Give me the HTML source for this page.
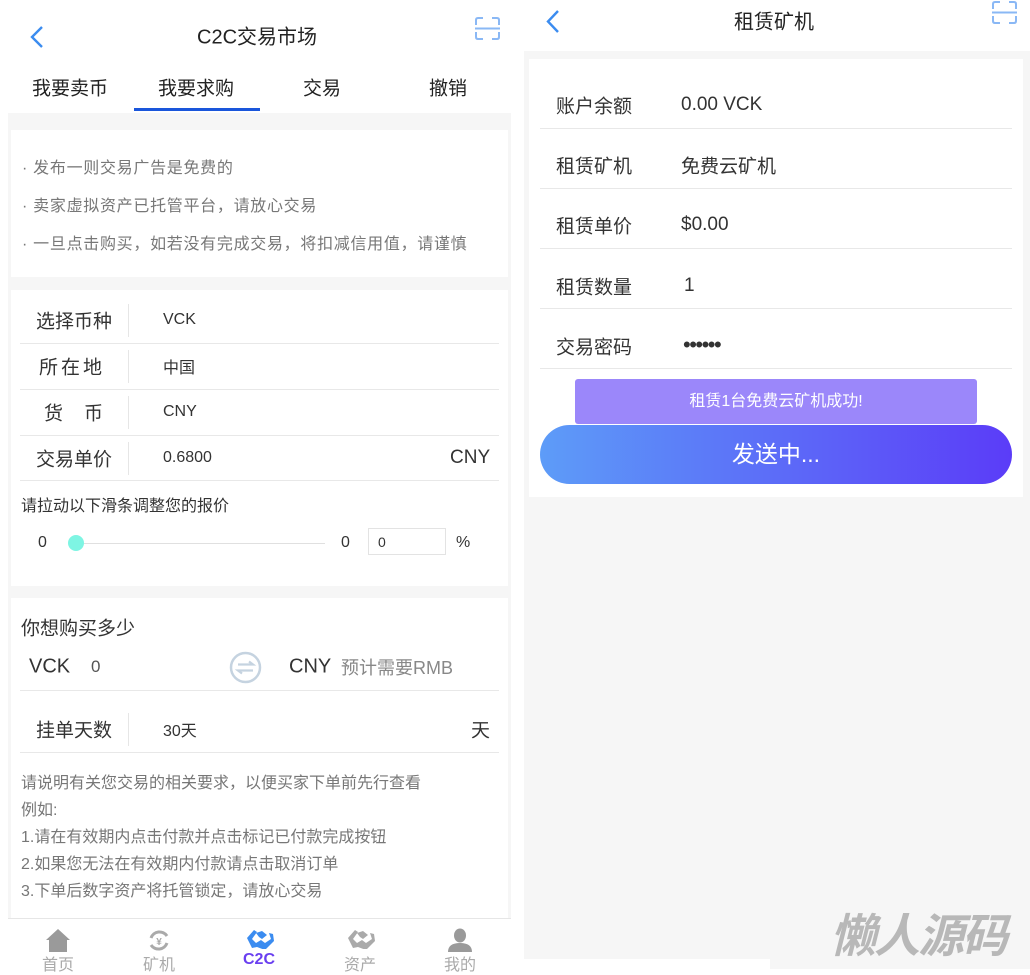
<!DOCTYPE html>
<html><head><meta charset="utf-8"><style>
*{margin:0;padding:0;box-sizing:border-box}
body{width:1030px;height:969px;position:relative;background:#fff;font-family:"Liberation Sans","Noto Sans CJK SC",sans-serif;color:#333;overflow:hidden}
.a{position:absolute;white-space:nowrap}
.t{transform:translateY(-50%)}
.gray{background:#f6f6f6}
.w{background:#fff}
.hl{position:absolute;height:1px;background:#e8e8e8}
.vl{position:absolute;width:1px;background:#e6e6e6}
.nav{position:absolute;top:928px;width:100px;text-align:center;font-size:16px;color:#aaa}
</style></head><body>
<!-- LEFT -->
<svg class="a" style="left:28px;top:25px" width="18" height="24" viewBox="0 0 18 24"><path d="M14 2L4 12l10 10" fill="none" stroke="#3b8cf0" stroke-width="2.4"/></svg>
<div class="a t" style="left:197px;top:35px;font-size:20px;color:#222">C2C交易市场</div>
<svg class="a" style="left:475px;top:17px" width="25" height="24" viewBox="0 0 25 24"><g fill="none" stroke="#8ab8f5" stroke-width="2"><path d="M1 8V3q0-2 2-2h5M17 1h5q2 0 2 2v5M1 15v5q0 2 2 2h5M17 22h5q2 0 2-2v-5"/><path d="M0 11.5h25"/></g></svg>
<div class="a t" style="left:32px;top:87px;font-size:19px;color:#222">我要卖币</div>
<div class="a t" style="left:158px;top:87px;font-size:19px;color:#222">我要求购</div>
<div class="a t" style="left:303px;top:87px;font-size:19px;color:#222">交易</div>
<div class="a t" style="left:429px;top:87px;font-size:19px;color:#222">撤销</div>
<div class="a" style="left:134px;top:108px;width:126px;height:3px;background:#1a56db"></div>
<div class="a gray" style="left:8px;top:113px;width:503px;height:805px"></div>
<div class="a w" style="left:11px;top:130px;width:497px;height:147px"></div>
<div class="a t" style="left:22px;top:166px;font-size:16px;color:#777;letter-spacing:0.7px">· 发布一则交易广告是免费的</div>
<div class="a t" style="left:22px;top:204px;font-size:16px;color:#777;letter-spacing:0.7px">· 卖家虚拟资产已托管平台，请放心交易</div>
<div class="a t" style="left:22px;top:242px;font-size:16px;color:#777;letter-spacing:0.7px">· 一旦点击购买，如若没有完成交易，将扣减信用值，请谨慎</div>
<div class="a w" style="left:11px;top:290px;width:497px;height:296px"></div>
<div class="a t" style="left:36px;top:320px;font-size:19px">选择币种</div>
<div class="a t" style="left:39px;top:366px;font-size:19px;letter-spacing:3px">所在地</div>
<div class="a t" style="left:44px;top:412px;font-size:19px;letter-spacing:21px">货币</div>
<div class="a t" style="left:36px;top:458px;font-size:19px">交易单价</div>
<div class="vl" style="left:128px;top:304px;height:33px"></div>
<div class="vl" style="left:128px;top:350px;height:33px"></div>
<div class="vl" style="left:128px;top:396px;height:33px"></div>
<div class="vl" style="left:128px;top:442px;height:33px"></div>
<div class="hl" style="left:20px;top:343px;width:479px"></div>
<div class="hl" style="left:20px;top:389px;width:479px"></div>
<div class="hl" style="left:20px;top:435px;width:479px"></div>
<div class="hl" style="left:20px;top:480px;width:479px"></div>
<div class="a t" style="left:163px;top:320px;font-size:16px">VCK</div>
<div class="a t" style="left:163px;top:366px;font-size:16px">中国</div>
<div class="a t" style="left:163px;top:412px;font-size:16px">CNY</div>
<div class="a t" style="left:163px;top:458px;font-size:16px">0.6800</div>
<div class="a t" style="left:450px;top:458px;font-size:19px">CNY</div>
<div class="a t" style="left:21px;top:504px;font-size:16px">请拉动以下滑条调整您的报价</div>
<div class="a t" style="left:38px;top:543px;font-size:16px">0</div>
<div class="a" style="left:75px;top:543px;width:250px;height:1px;background:#e0e0e0"></div>
<div class="a" style="left:68px;top:535px;width:16px;height:16px;border-radius:50%;background:#7ef5e3"></div>
<div class="a t" style="left:341px;top:543px;font-size:16px">0</div>
<div class="a" style="left:368px;top:528px;width:78px;height:27px;border:1px solid #e3e3e3"></div>
<div class="a t" style="left:378px;top:542px;font-size:14px">0</div>
<div class="a t" style="left:456px;top:543px;font-size:16px">%</div>
<div class="a w" style="left:11px;top:598px;width:497px;height:320px"></div>
<div class="a t" style="left:21px;top:627px;font-size:19px">你想购买多少</div>
<div class="a t" style="left:29px;top:667px;font-size:20px">VCK</div>
<div class="a t" style="left:91px;top:667px;font-size:17px;color:#555">0</div>
<svg class="a" style="left:229px;top:651px" width="33" height="33" viewBox="0 0 33 33"><circle cx="16.5" cy="16.5" r="14.5" fill="none" stroke="#c5d3e0" stroke-width="2.5"/><path d="M9 13.5h15l-4-3M24 19.5H9l4 3" fill="none" stroke="#c5d3e0" stroke-width="2.2"/></svg>
<div class="a t" style="left:289px;top:667px;font-size:20px">CNY</div>
<div class="a t" style="left:341px;top:667px;font-size:18px;color:#888">预计需要RMB</div>
<div class="hl" style="left:20px;top:690px;width:479px"></div>
<div class="a t" style="left:36px;top:729px;font-size:19px">挂单天数</div>
<div class="vl" style="left:128px;top:713px;height:33px"></div>
<div class="a t" style="left:163px;top:729px;font-size:16px">30天</div>
<div class="a t" style="left:471px;top:729px;font-size:19px">天</div>
<div class="hl" style="left:20px;top:752px;width:479px"></div>
<div class="a t" style="left:21px;top:781px;font-size:16px;color:#777">请说明有关您交易的相关要求，以便买家下单前先行查看</div>
<div class="a t" style="left:21px;top:808px;font-size:16px;color:#777">例如:</div>
<div class="a t" style="left:21px;top:835px;font-size:16px;color:#777">1.请在有效期内点击付款并点击标记已付款完成按钮</div>
<div class="a t" style="left:21px;top:862px;font-size:16px;color:#777">2.如果您无法在有效期内付款请点击取消订单</div>
<div class="a t" style="left:21px;top:889px;font-size:16px;color:#777">3.下单后数字资产将托管锁定，请放心交易</div>
<div class="a" style="left:8px;top:918px;width:503px;height:1px;background:#e6e6e6"></div>
<!-- nav icons -->
<svg class="a" style="left:46px;top:929px" width="24" height="23" viewBox="0 0 24 23"><path d="M12 0L0 11h3v12h18V11h3z" fill="#9a9a9a"/></svg>
<svg class="a" style="left:147px;top:929px" width="24" height="23" viewBox="0 0 24 23"><path d="M4 9A9 9 0 0 1 20 7M20 14A9 9 0 0 1 4 16" fill="none" stroke="#aaa" stroke-width="3"/><text x="12" y="16" font-size="10" font-weight="bold" text-anchor="middle" fill="#aaa" font-family="Liberation Sans">¥</text></svg>
<svg class="a" style="left:246px;top:929px" width="28" height="20" viewBox="0 0 28 20"><path d="M1 9l7-8 3 2-5 7 4 4 5-3 4 3 6-4-2-6 4 1 1 7-9 9-8-3-5 1z" fill="#3b8cf0"/><path d="M10 4l6-2 5 4-5 4-3-2" fill="#3b8cf0"/></svg>
<svg class="a" style="left:347px;top:929px" width="28" height="20" viewBox="0 0 28 20"><path d="M1 9l7-8 3 2-5 7 4 4 5-3 4 3 6-4-2-6 4 1 1 7-9 9-8-3-5 1z" fill="#aaa"/><path d="M10 4l6-2 5 4-5 4-3-2" fill="#aaa"/></svg>
<svg class="a" style="left:448px;top:928px" width="24" height="24" viewBox="0 0 24 24"><ellipse cx="12" cy="7.5" rx="6" ry="7" fill="#9a9a9a"/><path d="M0 24q0-9 12-9t12 9z" fill="#9a9a9a"/></svg>
<div class="nav" style="left:8px;top:951px">首页</div>
<div class="nav" style="left:109px;top:951px">矿机</div>
<div class="nav" style="left:209px;top:951px;color:#6a3ff0;font-weight:bold">C2C</div>
<div class="nav" style="left:310px;top:951px">资产</div>
<div class="nav" style="left:410px;top:951px">我的</div>
<!-- RIGHT -->
<div class="a gray" style="left:524px;top:51px;width:506px;height:908px"></div>
<div class="a gray" style="left:770px;top:959px;width:260px;height:10px"></div>
<svg class="a" style="left:544px;top:9px" width="18" height="25" viewBox="0 0 18 25"><path d="M14 2L4 12.5 14 23" fill="none" stroke="#3b8cf0" stroke-width="2.4"/></svg>
<div class="a t" style="left:734px;top:20px;font-size:20px;color:#222">租赁矿机</div>
<svg class="a" style="left:992px;top:1px" width="25" height="24" viewBox="0 0 25 24"><g fill="none" stroke="#8ab8f5" stroke-width="2"><path d="M1 8V3q0-2 2-2h5M17 1h5q2 0 2 2v5M1 15v5q0 2 2 2h5M17 22h5q2 0 2-2v-5"/><path d="M0 11.5h25"/></g></svg>
<div class="a w" style="left:529px;top:59px;width:494px;height:438px"></div>
<div class="a t" style="left:556px;top:105px;font-size:19px">账户余额</div>
<div class="a t" style="left:681px;top:105px;font-size:19px">0.00 VCK</div>
<div class="a t" style="left:556px;top:165px;font-size:19px">租赁矿机</div>
<div class="a t" style="left:681px;top:165px;font-size:19px">免费云矿机</div>
<div class="a t" style="left:556px;top:225px;font-size:19px">租赁单价</div>
<div class="a t" style="left:681px;top:225px;font-size:19px">$0.00</div>
<div class="a t" style="left:556px;top:286px;font-size:19px">租赁数量</div>
<div class="a t" style="left:684px;top:286px;font-size:19px">1</div>
<div class="a t" style="left:556px;top:346px;font-size:19px">交易密码</div>
<div class="a t" style="left:683px;top:345px;font-size:22px;letter-spacing:-1.5px">••••••</div>
<div class="hl" style="left:540px;top:128px;width:472px"></div>
<div class="hl" style="left:540px;top:188px;width:472px"></div>
<div class="hl" style="left:540px;top:248px;width:472px"></div>
<div class="hl" style="left:540px;top:308px;width:472px"></div>
<div class="hl" style="left:540px;top:368px;width:472px"></div>
<div class="a" style="left:575px;top:379px;width:402px;height:45px;background:#9b87fa;border-radius:3px;color:#fff;font-size:16px;text-align:center;line-height:45px">租赁1台免费云矿机成功!</div>
<div class="a" style="left:540px;top:425px;width:472px;height:59px;border-radius:30px;background:linear-gradient(90deg,#5d9cf8,#5b3cf8);color:#fff;font-size:23px;text-align:center;line-height:58px">发送中...</div>
<div class="a" style="left:830px;top:903px;font-size:46px;font-weight:bold;font-style:italic;color:#b8b8b8;letter-spacing:-2px;font-family:'Noto Sans CJK SC',sans-serif;line-height:60px">懒人源码</div>
</body></html>
